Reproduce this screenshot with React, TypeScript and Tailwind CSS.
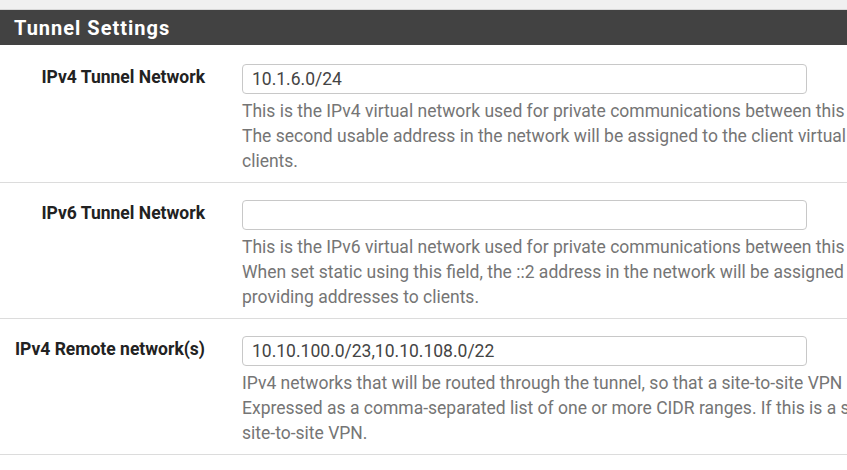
const rows = [
  {
    label: "IPv4 Tunnel Network",
    value: "10.1.6.0/24",
    help: [
      "This is the IPv4 virtual network used for private communications between this",
      "The second usable address in the network will be assigned to the client virtual",
      "clients.",
    ],
  },
  {
    label: "IPv6 Tunnel Network",
    value: "",
    help: [
      "This is the IPv6 virtual network used for private communications between this",
      "When set static using this field, the ::2 address in the network will be assigned",
      "providing addresses to clients.",
    ],
  },
  {
    label: "IPv4 Remote network(s)",
    value: "10.10.100.0/23,10.10.108.0/22",
    help: [
      "IPv4 networks that will be routed through the tunnel, so that a site-to-site VPN",
      "Expressed as a comma-separated list of one or more CIDR ranges. If this is a s",
      "site-to-site VPN.",
    ],
  },
];

export default function App() {
  return (
    <div
      className="w-[847px] h-[470px] overflow-hidden bg-white"
      style={{ fontFamily: "Roboto, 'Liberation Sans', sans-serif" }}
    >
      {/* strip of the panel above */}
      <div className="h-[10px] bg-[#f0f0f0] border-b border-[#d8d8d8]" />

      {/* panel heading */}
      <div className="h-[35px] bg-[#424242] flex items-center pl-[14px]">
        <h2 className="text-white font-bold text-[20px] tracking-[1px] leading-none">
          Tunnel Settings
        </h2>
      </div>

      {rows.map((row, i) => (
        <div
          key={row.label}
          className={`flex border-b border-[#dcdcdc] ${i === 0 ? "pt-[19px] pb-[8px]" : "pt-[17px] pb-[8px]"}`}
        >
          <div className="w-[205px] shrink-0 text-right pt-[1px]">
            <span className="font-bold text-[17.5px] leading-[25px] text-[#222]">
              {row.label}
            </span>
          </div>
          <div className="ml-[37px] flex-1 min-w-0">
            <div className="w-[565px] h-[30px] border border-[#c8c8c8] rounded-[4px] flex items-center px-[9px] text-[17.5px] text-[#444]">
              {row.value}
            </div>
            <div className="mt-[5px] text-[17.5px] leading-[25px] text-[#757575]">
              {row.help.map((line) => (
                <div key={line} className="whitespace-nowrap">
                  {line}
                </div>
              ))}
            </div>
          </div>
        </div>
      ))}
    </div>
  );
}
